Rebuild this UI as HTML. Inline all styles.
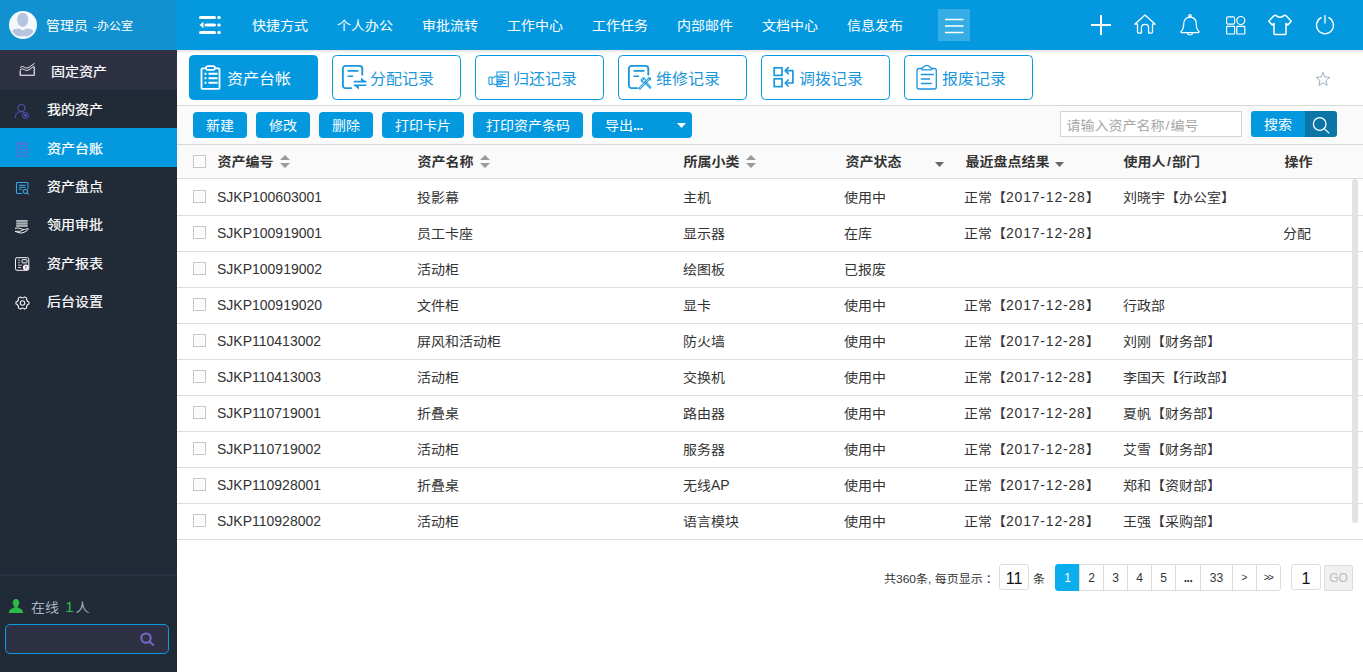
<!DOCTYPE html>
<html lang="zh-CN">
<head>
<meta charset="utf-8">
<title>资产台帐</title>
<style>
*{box-sizing:border-box;margin:0;padding:0}
html,body{width:1363px;height:672px;overflow:hidden;background:#fff}
body{font-family:"Liberation Sans","Noto Sans CJK SC",sans-serif;font-size:14px;color:#333;position:relative}
.abs{position:absolute}
svg{display:block;overflow:visible}
/* sidebar */
#side{position:absolute;left:0;top:0;width:177px;height:672px;background:#212a37}
#user{position:absolute;left:0;top:0;width:177px;height:50px;background:#1191cf}
#user .nm{position:absolute;left:46px;top:0;line-height:51px;color:#fff;font-size:14px;transform:scaleY(.9);white-space:nowrap}
#user .nm span{font-size:12px;margin-left:5px}
#sect{position:absolute;left:0;top:50px;width:177px;height:40px;background:#2e3044;color:#fff}
#sect .tx{-webkit-text-stroke:.200px #fff;position:absolute;left:51px;top:.500px;line-height:41px;font-size:14px;transform:scaleY(.9)}
.mi{position:absolute;left:0;width:177px;height:38.4px;color:#fff}
.mi .tx{-webkit-text-stroke:.250px #fff;position:absolute;left:47px;top:.300px;line-height:38.4px;font-size:14px;transform:scaleY(.9);white-space:nowrap}
.mi.on{background:#0499df}
.mi svg{position:absolute}
#sline{position:absolute;left:0;top:574px;width:177px;height:2px;background:#2e3044}
#online{position:absolute;left:31px;top:596.700px;line-height:22px;font-size:14px;transform:scaleY(.9);color:#a9b3c0;white-space:nowrap}
#online b{font-weight:normal;color:#2dbd4e;margin-left:6px;margin-right:1.500px;font-size:16px}
#sbox{position:absolute;left:5px;top:624px;width:164px;height:30px;border:1px solid #0a9be0;border-radius:5px;background:#2e3044}
/* header */
#head{position:absolute;left:177px;top:0;width:1186px;height:50px;background:#0499df}
.nav{position:absolute;top:0;line-height:51px;color:#fff;font-size:14px;transform:scaleY(.9);white-space:nowrap}
#hbox{position:absolute;left:761px;top:9px;width:32px;height:32px;background:rgba(255,255,255,.2)}
/* tabs */
.tab{position:absolute;top:55px;width:129px;height:45px;border:1px solid #0499df;border-radius:4.500px;background:#fff;color:#1a97dc;font-size:16px;white-space:nowrap}
.tab .tx{position:absolute;left:37px;top:1px;line-height:44px;transform:scaleY(.95)}
.tab.on{background:#0499df;color:#fff}
.tab svg{position:absolute}
/* toolbar */
#tbar{position:absolute;left:177px;top:105px;width:1186px;height:40px;background:#fafafa;border-top:1px solid #d8d8d8;border-bottom:1px solid #d8d8d8}
.btn span{display:block;transform:scaleY(.9)}
.btn{position:absolute;top:112px;height:26px;border-radius:4px;background:#0499df;color:#fff;font-size:14px;line-height:26px;text-align:center;white-space:nowrap}
#sin{position:absolute;left:1060px;top:111px;width:182px;height:26px;border:1px solid #d5d5d5;background:#fff;color:#a6a6a6;font-size:14px;line-height:27px;padding-left:5.500px;white-space:nowrap}
/* table */
#thead{position:absolute;left:177px;top:145px;width:1186px;height:34px;background:#fafafa;border-bottom:1px solid #ddd}
.th{position:absolute;top:145px;margin-left:.500px;line-height:33px;font-weight:bold;font-size:14px;transform:scaleY(.9);color:#333;white-space:nowrap}
.row{position:absolute;left:177px;width:1186px;height:36px;border-bottom:1px solid #ddd}
.row span{position:absolute;top:-.700px;line-height:36px;font-size:14px;transform:scaleY(.9);color:#333;white-space:nowrap}
.n{display:inline-block;font-weight:normal;font-size:14px;transform:translateY(-.500px) scaleY(1.2)}
.d{display:inline-block;font-weight:normal;font-size:14px;letter-spacing:.8px;transform:translateY(-.500px) scaleY(1.2)}
.lo span{top:.300px}
.lo .c1{top:-.700px}
.lo span .n,.lo span .d{transform:translateY(-1.600px) scaleY(1.2)}
.lo .c1 .n{transform:translateY(-.500px) scaleY(1.2)}
.cb{position:absolute;width:13px;height:13px;border:1px solid #c6c6c6;background:#fbfbfb;box-shadow:inset 0 0 0 1px #fff}
.c1{left:40px}.c2{left:240px}.c3{left:506px}.c4{left:667px}.c5{left:787px}.c6{left:946px}.c7{left:1106px}
.sort{position:absolute}
/* pager */
.pg{position:absolute;top:564px;height:27px;line-height:26px;font-size:12px;color:#333;text-align:center;border:1px solid #ddd;background:#fff;white-space:nowrap}
</style>
</head>
<body>
<!-- ========== SIDEBAR ========== -->
<div id="side">
  <div id="user">
    <svg class="abs" style="left:9px;top:11px" width="28" height="28" viewBox="0 0 28 28">
      <defs><clipPath id="avc"><circle cx="14" cy="14" r="12.300"/></clipPath></defs>
      <circle cx="14" cy="14" r="14" fill="#f5f8fc"/>
      <g clip-path="url(#avc)" fill="#b4c4dc">
        <ellipse cx="13.700" cy="8.800" rx="5.600" ry="7.100"/>
        <path d="M3 25.200v-4.200c0-2 1.500-2.900 3.500-3.100l4.200-.400c2 2.300 4 2.300 6 0l4.200.400c2 .200 3.500 1.100 3.500 3.100v4.200z"/>
      </g>
    </svg>
    <div class="nm">管理员<span>-办公室</span></div>
  </div>
  <div id="sect">
    <svg class="abs" style="left:19px;top:12px" width="17" height="15" viewBox="0 0 17 15" fill="none" stroke="#fff" stroke-width="1.100"><path d="M1.200 8.500v4.800h14v-8.500"/><path d="M1 5.600c1.500-1.300 3-1.300 4.500-.300s3 1 4.500 0l5.600-3.900" stroke-width=".900"/><path d="M1 8c1.500-1.300 3-1.300 4.500-.300s3 1 4.500 0l5.200-3.500" stroke-width=".900"/></svg>
    <div class="tx">固定资产</div>
  </div>
  <div class="mi" style="top:90px">
    <svg style="left:14px;top:12px" width="16" height="17" viewBox="0 0 16 17" fill="none" stroke="#5757c8" stroke-width=".950"><circle cx="7.400" cy="6" r="3.600"/><path d="M1.300 16c0-3.500 2-6.300 6-6.300 1 0 1.800 .100 2.500 .500"/><circle cx="11.500" cy="13.500" r="3"/><circle cx="11.500" cy="13.500" r="1.400" fill="#5757c8" stroke="none"/></svg>
    <div class="tx">我的资产</div></div>
  <div class="mi on" style="top:128.400px">
    <svg style="left:16px;top:13.600px" width="12" height="15.200" viewBox="0 0 12 16" preserveAspectRatio="none" fill="none" stroke="#7560cc" stroke-width=".900"><path d="M3 1.500H.600v13.500h10.800V1.500H9"/><rect x="3" y=".500" width="6" height="2" rx="1"/><path d="M2.500 5h1M5 5h4.500M2.500 8h1M5 8h4.500M2.500 11h1M5 11h4.500"/></svg>
    <div class="tx">资产台账</div></div>
  <div class="mi" style="top:166.800px">
    <svg style="left:15.500px;top:15.200px" width="13.400" height="13.400" viewBox="0 0 14 14" fill="none" stroke="#3aa9ea" stroke-width="1.100"><path d="M6 12H1.500c-.600 0-1-.400-1-1V1.500c0-.600.400-1 1-1h10c.600 0 1 .400 1 1V7"/><path d="M3 3.300h7M3 5.500h7M3 7.600h3"/><circle cx="9.800" cy="9.800" r="2.300"/><path d="M11.500 11.500l1.800 1.800"/></svg>
    <div class="tx">资产盘点</div></div>
  <div class="mi" style="top:205.200px">
    <svg style="left:14px;top:14.400px" width="16" height="15" viewBox="0 0 16 15" fill="none"><rect x="2.200" y=".300" width="11.500" height="1.300" fill="#eee"/><rect x="2.200" y="2.300" width="11.500" height="2.400" fill="#a9adb5"/><rect x="2.200" y="5.300" width="11.500" height="1.300" fill="#eee"/><path d="M1 8.300c3-.800 6 .200 8 1.200 2 .200 3.500-1 5.500-.600-1.500 2.300-5 4-7.500 4.200C5 12.800 3 12 1 11.300c3 0 6 .300 8.500-1.600" stroke="#f4f4f4" stroke-width="1"/></svg>
    <div class="tx">领用审批</div></div>
  <div class="mi" style="top:243.600px">
    <svg style="left:15px;top:13.600px" width="15" height="14" viewBox="0 0 15 14" fill="none" stroke="#f4f4f4" stroke-width="1"><rect x=".500" y=".700" width="13.300" height="12.600" rx="1.500"/><path d="M3 3.200h2M3 5.700h2M3 8.200h4M3 10.500h3" stroke="#c8c8c8"/><rect x="7" y="2.700" width="5" height="3.200" rx=".500"/><circle cx="10.800" cy="10.300" r="2.900" fill="#fff" stroke="none"/><path d="M9.800 8.800l1 1.500 1-1.500M10.800 10.300v2" stroke="#8a4a7a" stroke-width=".800"/></svg>
    <div class="tx">资产报表</div></div>
  <div class="mi" style="top:282px">
    <svg style="left:14.500px;top:14.400px" width="15" height="14" viewBox="0 0 15 14" fill="none" stroke="#f4f4f4" stroke-width="1.100" stroke-linejoin="round"><path d="M5.300 .900l1.100.900h2.200l1.100-.900 2 1.200-.200 1.500 1.100 1.800 1.400.600v2l-1.400.600-1.100 1.800.200 1.500-2 1.200-1.100-.900H6.400l-1.100.900-2-1.200.200-1.500L2.400 8.600 1 8V6l1.400-.600 1.100-1.800-.200-1.500z"/><circle cx="7.500" cy="7" r="2.200"/></svg>
    <div class="tx">后台设置</div></div>
  <div id="sline"></div>
  <svg class="abs" style="left:9px;top:599px" width="14" height="14" viewBox="0 0 14 14" fill="#2aba4a"><path d="M7 0c2 0 3.300 1.600 3.300 3.800 0 1.700-.700 3-1.700 3.800v1c2.500.800 5.400 2.300 5.400 4.400v1H0v-1c0-2.100 2.900-3.600 5.400-4.400v-1c-1-.800-1.700-2.100-1.700-3.800C3.700 1.600 5 0 7 0z"/></svg>
  <div id="online">在线<b>1</b>人</div>
  <div id="sbox"><svg class="abs" style="left:133px;top:6px" width="16" height="16" viewBox="0 0 16 16" fill="none" stroke="#7668c9" stroke-width="2" stroke-linecap="round"><circle cx="7" cy="7.100" r="4.700"/><path d="M10.600 10.700l3.800 3.200"/></svg></div>
</div>

<!-- ========== HEADER ========== -->
<div id="head">
  <div id="hbox">
    <svg class="abs" style="left:6.500px;top:6.900px" width="20" height="20" viewBox="0 0 20 20" fill="none" stroke="#fff" stroke-width="1.500"><path d="M0 3.500h18.500M0 10h18.500M0 16.400h18.500"/></svg>
  </div>
  <!-- toggle -->
  <svg class="abs" style="left:22px;top:15px" width="23" height="21" viewBox="0 0 23 21" fill="#fff" stroke="none">
    <rect x="0" y="1" width="17" height="3" rx="1.500"/><rect x="18.200" y="1" width="3.600" height="3" rx="1.500"/>
    <rect x="5.500" y="8.500" width="11.500" height="3" rx="1.500"/><rect x="18.200" y="8.500" width="3.600" height="3" rx="1.500"/>
    <path d="M0.500 10l4-3.300v6.600z"/>
    <rect x="0" y="16" width="17" height="3" rx="1.500"/><rect x="18.200" y="16" width="3.600" height="3" rx="1.500"/>
  </svg>
  <!-- plus -->
  <svg class="abs" style="left:914px;top:15px" width="20" height="20" viewBox="0 0 20 20" fill="none" stroke="#fff" stroke-width="2"><path d="M10 0v20M0 10h20"/></svg>
  <!-- home -->
  <svg class="abs" style="left:957px;top:14px" width="22" height="20" viewBox="0 0 22 20" fill="none" stroke="#fff" stroke-width="1.300" stroke-linejoin="round" stroke-linecap="round"><path d="M0.800 10.200L11 1l10.200 9.200h-2.700v7.600c0 .8-.5 1.300-1.300 1.300h-2.600v-5.300c0-2-1.600-3.400-3.600-3.400s-3.600 1.400-3.600 3.400v5.300H4.800c-.8 0-1.300-.5-1.300-1.300v-7.600z"/></svg>
  <!-- bell -->
  <svg class="abs" style="left:1003px;top:14px" width="20" height="22" viewBox="0 0 20 22" fill="none" stroke="#fff" stroke-width="1.200" stroke-linejoin="round" stroke-linecap="round"><circle cx="10" cy="1.900" r="1.300"/><path d="M10 3.200c-4 0-6.300 3-6.300 7.200 0 3.700-1 5.700-2.900 7.400 0 .6.300.8.800.8h16.800c.5 0 .8-.2.800-.8-1.900-1.700-2.900-3.700-2.900-7.400 0-4.200-2.300-7.200-6.300-7.200z"/><path d="M7.300 18.800c.3 1.400 1.300 2.200 2.700 2.200s2.400-.8 2.700-2.200"/></svg>
  <!-- apps -->
  <svg class="abs" style="left:1049px;top:16px" width="20" height="19" viewBox="0 0 20 19" fill="none" stroke="#fff" stroke-width="1.200"><rect x="0.600" y="0.800" width="8" height="7.400" rx="1.500"/><circle cx="14.800" cy="4.500" r="4"/><rect x="0.600" y="10.400" width="8" height="7.600" rx="0.500"/><rect x="10.800" y="10.400" width="8" height="7.600" rx="0.500"/></svg>
  <!-- shirt -->
  <svg class="abs" style="left:1091px;top:14px" width="24" height="22" viewBox="0 0 24 22" fill="none" stroke="#fff" stroke-width="1.500" stroke-linejoin="round"><path d="M8 1.200c1 1.400 2.400 2 4 2s3-.6 4-2l2.200.6 5 5.400-3.400 3.700-1.800-1.500v10c0 .6-.4 1-1 1H7c-.6 0-1-.4-1-1v-10l-1.800 1.500L.8 7.200l5-5.400z"/></svg>
  <!-- power -->
  <svg class="abs" style="left:1138px;top:15px" width="20" height="20" viewBox="0 0 20 20" fill="none" stroke="#fff" stroke-width="1.300" stroke-linecap="round"><path d="M10 0.600v7.400"/><path d="M6.200 2.700a8.500 8.500 0 1 0 7.600 0"/></svg>
</div>
<div class="nav" style="left:252px">快捷方式</div>
<div class="nav" style="left:337px">个人办公</div>
<div class="nav" style="left:422px">审批流转</div>
<div class="nav" style="left:507px">工作中心</div>
<div class="nav" style="left:592px">工作任务</div>
<div class="nav" style="left:677px">内部邮件</div>
<div class="nav" style="left:762px">文档中心</div>
<div class="nav" style="left:847px">信息发布</div>

<div class="abs" style="left:177px;top:50px;width:1186px;height:3px;background:linear-gradient(#e2e2e2,#fcfcfc)"></div>
<!-- ========== TABS ========== -->
<div class="tab on" style="left:189px">
  <svg style="left:10.400px;top:9px" width="21" height="26" viewBox="0 0 21 26" fill="none" stroke="#fff" stroke-width="1.800" stroke-linejoin="round"><path d="M5.500 3.300H2.500c-.600 0-1 .400-1 1v18.600c0 .600.400 1 1 1h16c.600 0 1-.400 1-1V4.300c0-.600-.400-1-1-1H15.500"/><rect x="6" y="1.200" width="9" height="3.600" rx="1.800"/><path d="M4.500 8.700h2M8.500 8.700h9M4.500 13.200h2M8.500 13.200h9M4.500 17.800h2M8.500 17.800h9" stroke-width="2"/></svg>
  <div class="tx">资产台帐</div></div>
<div class="tab" style="left:332px">
  <svg style="left:8px;top:8px" width="27" height="27" viewBox="0 0 26 26" fill="none" stroke="#1a97dc" stroke-width="1.800"><path d="M10.500 23.200H4.500c-1.600 0-2.700-1.100-2.700-2.700V4.500c0-1.600 1.100-2.700 2.700-2.700h13.300c1.600 0 2.700 1.100 2.700 2.700v6.500"/><path d="M6.300 6.600h10.500M6.300 11.800h5.400" stroke-width="1.500"/><path d="M12.300 17h12.200M12.300 20.500h12.200" stroke-width="1.600"/><path d="M19.300 13l4.700 4h-4.700zM17.300 24.500l-4.700-4h4.700z" fill="#1a97dc" stroke="none"/></svg>
  <div class="tx">分配记录</div></div>
<div class="tab" style="left:475px">
  <svg style="left:12px;top:15px" width="22" height="17" viewBox="0 0 22 17" fill="none" stroke="#1a97dc" stroke-width="1.100"><rect x="9" y="1" width="11.300" height="14.600"/><path d="M11.500 3.800h6M15 6.500h3.300M15 9.500h3.300M15 12.500h3.300" stroke-width="1"/><rect x="1" y="6" width="3" height="7.500" rx=".800"/><path d="M4 7.200l3.500-2h6.500c1 0 1 1.600 0 1.600H9.500M9 8.800h5.500c1 0 1 1.600 0 1.600H9M9 10.500h4.800c1 0 1 1.600 0 1.600H9M4 12.500l3 1.200h5.700c1 0 1-1.500 0-1.500"/></svg>
  <div class="tx">归还记录</div></div>
<div class="tab" style="left:618px">
  <svg style="left:8px;top:8px" width="27" height="27" viewBox="0 0 26 26" fill="none" stroke="#1a97dc" stroke-width="1.800"><path d="M10.500 23.200H4.500c-1.600 0-2.700-1.100-2.700-2.700V4.500c0-1.600 1.100-2.700 2.700-2.700h13.300c1.600 0 2.700 1.100 2.700 2.700v6.500"/><path d="M6.300 6.600h10.500M6.300 11.800h5.400" stroke-width="1.500"/><g stroke-width="1"><path d="M11.500 23.300l9.200-9.600 1 1-9.200 9.600zM20 13.300l2.500.200.300 2.300"/><path d="M22.300 23.500l-6-6.300M23.300 22.500l-6-6.300M22.300 23.500l1-1M17.300 16.200c.800-1.500-.500-3.300-2.300-2.800l1 1.300-1 1-1.300-1c-.500 1.800 1.300 3.100 2.800 2.400"/></g></svg>
  <div class="tx">维修记录</div></div>
<div class="tab" style="left:761px">
  <svg style="left:10.300px;top:9.200px" width="24" height="24" viewBox="0 0 24 24" fill="none" stroke="#1a97dc" stroke-width="1.700"><rect x="2.200" y="2.800" width="7.800" height="7.600"/><rect x="2.200" y="13.800" width="7.800" height="7.800"/><path d="M13.500 5.600h7.400v12.400h-7.400" stroke-linejoin="round"/><path d="M16.200 2.600l-3 3 3 3M16.200 15l-3 3 3 3" stroke-linecap="round" stroke-linejoin="round"/></svg>
  <div class="tx">调拨记录</div></div>
<div class="tab" style="left:904px">
  <svg style="left:9.500px;top:8.200px" width="24" height="26" viewBox="0 0 24 26" fill="none" stroke="#1a97dc" stroke-width="1.300"><path d="M7.500 4.500H4c-1.200 0-2 .800-2 2v16.500c0 1.200.800 2 2 2h15.300c1.200 0 2-.800 2-2V6.500c0-1.200-.800-2-2-2H16"/><path d="M7.500 5.800c-.800 0-1.200-.900-.600-1.500 1.500-1.600 2.800-3 4.800-3s3.300 1.400 4.800 3c.600.600.200 1.500-.600 1.500z"/><path d="M5.800 10.600h13M5.800 15h9.300M5.800 19.400h11" stroke-width="1.500"/></svg>
  <div class="tx">报废记录</div></div>

<svg class="abs" style="left:1314.900px;top:71.200px" width="16" height="16" viewBox="0 0 16 16" fill="none" stroke="#9bafc4" stroke-width="1" stroke-linejoin="round"><polygon points="8.00,1.50 9.88,6.01 14.75,6.41 11.04,9.59 12.17,14.34 8.00,11.80 3.83,14.34 4.96,9.59 1.25,6.41 6.12,6.01"/></svg>
<!-- ========== TOOLBAR ========== -->
<div id="tbar"></div>
<div class="btn" style="left:193px;width:54px"><span>新建</span></div>
<div class="btn" style="left:256px;width:54px"><span>修改</span></div>
<div class="btn" style="left:319px;width:54px"><span>删除</span></div>
<div class="btn" style="left:382px;width:82px"><span>打印卡片</span></div>
<div class="btn" style="left:473px;width:110px"><span>打印资产条码</span></div>
<div class="btn" style="left:592px;width:100px;text-align:left;padding-left:13px"><span>导出<i style="font-style:normal;font-weight:bold;position:relative;top:1px;letter-spacing:-.600px">...</i></span></div>
<svg class="abs" style="left:676.500px;top:122.700px" width="9" height="5" viewBox="0 0 9 5" fill="#fff"><path d="M0 0h9l-4.500 5z"/></svg>
<div id="sin"><span style="display:block;transform:scaleY(.9)">请输入资产名称<i style="font-style:normal;margin:0 1px">/</i>编号</span></div>
<div class="btn" style="left:1251px;top:111px;width:54px;border-radius:3px 0 0 3px"><span>搜索</span></div>
<div class="btn" style="left:1305px;top:111px;width:32px;border-radius:0 3px 3px 0;background:#0b75a8"><svg class="abs" style="left:7px;top:6px" width="18" height="18" viewBox="0 0 18 18" fill="none" stroke="#fff" stroke-width="1.300" stroke-linecap="round"><circle cx="7.700" cy="7" r="6.300"/><path d="M12.300 11.600l4.500 4.300"/></svg></div>

<!-- ========== TABLE ========== -->
<div id="thead"></div>
<div class="cb" style="left:193px;top:155px"></div>
<div class="th" style="left:217px">资产编号</div>
<div class="th" style="left:417px">资产名称</div>
<div class="th" style="left:683px">所属小类</div>
<div class="th" style="left:845px">资产状态</div>
<div class="th" style="left:965px">最近盘点结果</div>
<div class="th" style="left:1123px">使用人<i style="font-style:normal;margin:0 1px 0 1.500px">/</i>部门</div>
<div class="th" style="left:1284px">操作</div>

<svg class="abs" style="left:280px;top:155px" width="10" height="13" viewBox="0 0 10 13" fill="#9b9b9b"><path d="M0 5l5-5 5 5zM0 8l5 5 5-5z"/></svg>
<svg class="abs" style="left:480px;top:155px" width="10" height="13" viewBox="0 0 10 13" fill="#9b9b9b"><path d="M0 5l5-5 5 5zM0 8l5 5 5-5z"/></svg>
<svg class="abs" style="left:746px;top:155px" width="10" height="13" viewBox="0 0 10 13" fill="#9b9b9b"><path d="M0 5l5-5 5 5zM0 8l5 5 5-5z"/></svg>
<svg class="abs" style="left:934.5px;top:161.500px" width="9" height="5" viewBox="0 0 9 5" fill="#666"><path d="M0 0h9l-4.500 5z"/></svg>
<svg class="abs" style="left:1054.5px;top:161.500px" width="9" height="5" viewBox="0 0 9 5" fill="#666"><path d="M0 0h9l-4.500 5z"/></svg>
<div id="rows">
<div class="row" style="top:180px"><i class="cb" style="left:16px;top:10px"></i><span class="c1"><b class="n">SJKP100603001</b></span><span class="c2">投影幕</span><span class="c3">主机</span><span class="c4">使用中</span><span class="c5">正常【<b class="d">2017-12-28</b>】</span><span class="c6">刘晓宇【办公室】</span></div>
<div class="row" style="top:216px"><i class="cb" style="left:16px;top:10px"></i><span class="c1"><b class="n">SJKP100919001</b></span><span class="c2">员工卡座</span><span class="c3">显示器</span><span class="c4">在库</span><span class="c5">正常【<b class="d">2017-12-28</b>】</span><span class="c7">分配</span></div>
<div class="row" style="top:252px"><i class="cb" style="left:16px;top:10px"></i><span class="c1"><b class="n">SJKP100919002</b></span><span class="c2">活动柜</span><span class="c3">绘图板</span><span class="c4">已报废</span></div>
<div class="row lo" style="top:288px"><i class="cb" style="left:16px;top:10px"></i><span class="c1"><b class="n">SJKP100919020</b></span><span class="c2">文件柜</span><span class="c3">显卡</span><span class="c4">使用中</span><span class="c5">正常【<b class="d">2017-12-28</b>】</span><span class="c6">行政部</span></div>
<div class="row lo" style="top:324px"><i class="cb" style="left:16px;top:10px"></i><span class="c1"><b class="n">SJKP110413002</b></span><span class="c2">屏风和活动柜</span><span class="c3">防火墙</span><span class="c4">使用中</span><span class="c5">正常【<b class="d">2017-12-28</b>】</span><span class="c6">刘刚【财务部】</span></div>
<div class="row lo" style="top:360px"><i class="cb" style="left:16px;top:10px"></i><span class="c1"><b class="n">SJKP110413003</b></span><span class="c2">活动柜</span><span class="c3">交换机</span><span class="c4">使用中</span><span class="c5">正常【<b class="d">2017-12-28</b>】</span><span class="c6">李国天【行政部】</span></div>
<div class="row lo" style="top:396px"><i class="cb" style="left:16px;top:10px"></i><span class="c1"><b class="n">SJKP110719001</b></span><span class="c2">折叠桌</span><span class="c3">路由器</span><span class="c4">使用中</span><span class="c5">正常【<b class="d">2017-12-28</b>】</span><span class="c6">夏帆【财务部】</span></div>
<div class="row lo" style="top:432px"><i class="cb" style="left:16px;top:10px"></i><span class="c1"><b class="n">SJKP110719002</b></span><span class="c2">活动柜</span><span class="c3">服务器</span><span class="c4">使用中</span><span class="c5">正常【<b class="d">2017-12-28</b>】</span><span class="c6">艾雪【财务部】</span></div>
<div class="row lo" style="top:468px"><i class="cb" style="left:16px;top:10px"></i><span class="c1"><b class="n">SJKP110928001</b></span><span class="c2">折叠桌</span><span class="c3">无线<b class="n">AP</b></span><span class="c4">使用中</span><span class="c5">正常【<b class="d">2017-12-28</b>】</span><span class="c6">郑和【资财部】</span></div>
<div class="row lo" style="top:504px"><i class="cb" style="left:16px;top:10px"></i><span class="c1"><b class="n">SJKP110928002</b></span><span class="c2">活动柜</span><span class="c3">语言模块</span><span class="c4">使用中</span><span class="c5">正常【<b class="d">2017-12-28</b>】</span><span class="c6">王强【采购部】</span></div>
</div>

<!-- ========== PAGER ========== -->
<div class="abs" style="left:1352px;top:179px;width:6px;height:344px;border-radius:3px;background:#e2e2e2"></div>
<div class="abs" style="left:884px;top:567px;line-height:24px;font-size:12px;color:#333;white-space:nowrap;transform:scaleY(.92)">共360条, 每页显示<span style="margin-left:3px">：</span></div>
<div class="pg" style="left:999px;top:564px;width:30px;height:26px;border-radius:3px;font-size:16px;line-height:27px;color:#111">11</div>
<div class="abs" style="left:1033px;top:567px;line-height:24px;font-size:12px;color:#333;transform:scaleY(.92)">条</div>
<div class="pg" style="left:1055px;width:25px;border-color:#0aaeec;background:#0aaeec;color:#fff;border-radius:3px 0 0 3px">1</div>
<div class="pg" style="left:1079px;width:25px">2</div>
<div class="pg" style="left:1103px;width:25px">3</div>
<div class="pg" style="left:1127px;width:25px">4</div>
<div class="pg" style="left:1151px;width:25px">5</div>
<div class="pg" style="left:1175px;width:26px;letter-spacing:-.500px;font-weight:bold">...</div>
<div class="pg" style="left:1200px;width:33px">33</div>
<div class="pg" style="left:1232px;width:25px;font-size:10px">&gt;</div>
<div class="pg" style="left:1256px;width:25px;border-radius:0 3px 3px 0;font-size:10px;letter-spacing:-1.500px;text-indent:-1px">&gt;&gt;</div>
<div class="pg" style="left:1291px;top:564px;width:30px;height:26px;border-radius:3px;font-size:16px;line-height:27px;color:#111">1</div>
<div class="pg" style="left:1324px;top:565px;width:29px;height:26px;line-height:25px;border-radius:2px;background:#f0f0f0;color:#bbb;font-size:12px">GO</div>
</body>
</html>
